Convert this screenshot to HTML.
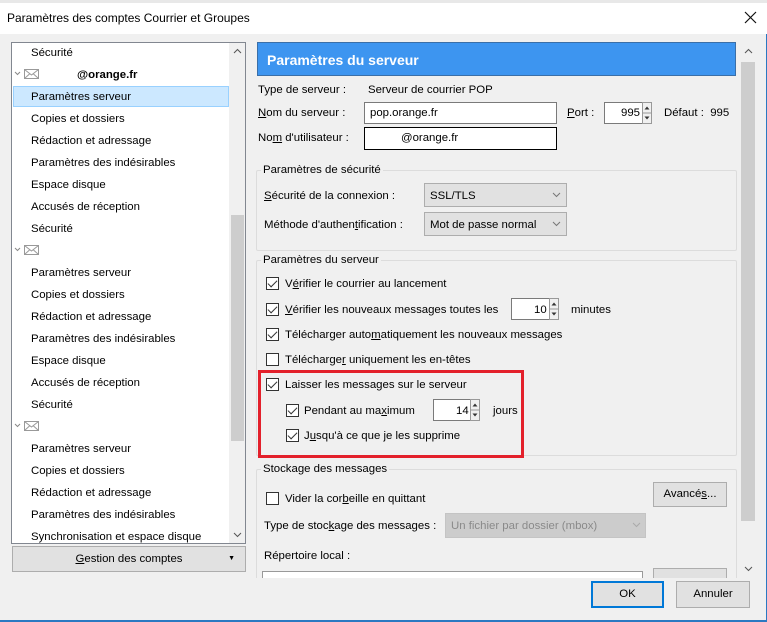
<!DOCTYPE html>
<html><head><meta charset="utf-8"><style>
*{box-sizing:border-box;margin:0;padding:0}
body{width:767px;height:622px;overflow:hidden;background:#f0f0f0;font-family:"Liberation Sans",sans-serif;font-size:11.4px;color:#000;position:relative}
.a{position:absolute;white-space:nowrap}
.t{position:absolute;white-space:nowrap;line-height:14px}
.cb{position:absolute;width:13px;height:13px;border:1px solid #333;background:#fff}
.cb.c::after{content:"";position:absolute;left:3px;top:0px;width:4px;height:8px;border:solid #333;border-width:0 1.5px 1.5px 0;transform:rotate(45deg)}
.in{position:absolute;background:#fff;border:1px solid #7a7a7a}
.sel{position:absolute;background:#e1e1e1;border:1px solid #adadad}
.gb{position:absolute;border:1px solid #dcdcdc;border-radius:2px}
.btn{position:absolute;background:#e1e1e1;border:1px solid #adadad;text-align:center}
.spin{position:absolute;width:10px;height:22px}
u{text-decoration:underline}
.env{position:absolute}
</style></head><body>
<div class="a" style="left:0;top:0;width:767px;height:3px;background:#e8e8e8"></div>
<div class="a" style="left:0;top:3px;width:767px;height:31px;background:#fff"></div>
<div class="t" style="left:7px;top:11px;font-size:12px">Paramètres des comptes Courrier et Groupes</div>
<svg class="a" style="left:744px;top:11px" width="13" height="13"><path d="M1 1L12 12M12 1L1 12" stroke="#111" stroke-width="1.2"/></svg>
<div class="a" style="left:766px;top:34px;width:1px;height:588px;background:#2b79c2"></div>
<div class="a" style="left:0;top:620px;width:767px;height:2px;background:#2b79c2"></div>

<!-- tree -->
<div class="a" style="left:11px;top:42px;width:235px;height:502px;background:#fff;border:1px solid #828790"></div>
<div class="a" style="left:229px;top:43px;width:16px;height:500px;background:#f0f0f0"></div>
<div class="a" style="left:231px;top:215px;width:13px;height:226px;background:#cdcdcd"></div>
<svg class="a" style="left:233px;top:48px" width="9" height="6"><path d="M1 5L4.5 1.5L8 5" stroke="#555" fill="none"/></svg>
<svg class="a" style="left:233px;top:532px" width="9" height="6"><path d="M1 1L4.5 4.5L8 1" stroke="#555" fill="none"/></svg>
<div class="a" style="left:13px;top:86px;width:216px;height:21px;background:#cce8ff;border:1px solid #99d1ff"></div>
<div class="t" style="left:31px;top:46px">Sécurité</div>
<svg class="env" style="left:14px;top:68px" width="26" height="12"><path d="M1 4L3.5 6.5L6 4" stroke="#888" fill="none"/><rect x="10.5" y="1.5" width="14" height="9" fill="#fff" stroke="#999"/><path d="M10.5 1.5L17.5 7L24.5 1.5M10.5 10.5L15.5 6M24.5 10.5L19.5 6" stroke="#999" fill="none"/></svg>
<div class="t" style="left:77px;top:68px;font-weight:bold">@orange.fr</div>
<div class="t" style="left:31px;top:90px">Paramètres serveur</div>
<div class="t" style="left:31px;top:112px">Copies et dossiers</div>
<div class="t" style="left:31px;top:134px">Rédaction et adressage</div>
<div class="t" style="left:31px;top:156px">Paramètres des indésirables</div>
<div class="t" style="left:31px;top:178px">Espace disque</div>
<div class="t" style="left:31px;top:200px">Accusés de réception</div>
<div class="t" style="left:31px;top:222px">Sécurité</div>
<svg class="env" style="left:14px;top:244px" width="26" height="12"><path d="M1 4L3.5 6.5L6 4" stroke="#888" fill="none"/><rect x="10.5" y="1.5" width="14" height="9" fill="#fff" stroke="#999"/><path d="M10.5 1.5L17.5 7L24.5 1.5M10.5 10.5L15.5 6M24.5 10.5L19.5 6" stroke="#999" fill="none"/></svg>
<div class="t" style="left:31px;top:266px">Paramètres serveur</div>
<div class="t" style="left:31px;top:288px">Copies et dossiers</div>
<div class="t" style="left:31px;top:310px">Rédaction et adressage</div>
<div class="t" style="left:31px;top:332px">Paramètres des indésirables</div>
<div class="t" style="left:31px;top:354px">Espace disque</div>
<div class="t" style="left:31px;top:376px">Accusés de réception</div>
<div class="t" style="left:31px;top:398px">Sécurité</div>
<svg class="env" style="left:14px;top:420px" width="26" height="12"><path d="M1 4L3.5 6.5L6 4" stroke="#888" fill="none"/><rect x="10.5" y="1.5" width="14" height="9" fill="#fff" stroke="#999"/><path d="M10.5 1.5L17.5 7L24.5 1.5M10.5 10.5L15.5 6M24.5 10.5L19.5 6" stroke="#999" fill="none"/></svg>
<div class="t" style="left:31px;top:442px">Paramètres serveur</div>
<div class="t" style="left:31px;top:464px">Copies et dossiers</div>
<div class="t" style="left:31px;top:486px">Rédaction et adressage</div>
<div class="t" style="left:31px;top:508px">Paramètres des indésirables</div>
<div class="t" style="left:31px;top:530px">Synchronisation et espace disque</div>
<div class="btn" style="left:12px;top:546px;width:234px;height:26px;line-height:24px"><u>G</u>estion des comptes<span style="position:absolute;right:10px;font-size:7px">▼</span></div>

<!-- right -->
<div class="a" style="left:739px;top:42px;width:17px;height:536px;background:#f0f0f0"></div>
<div class="a" style="left:741px;top:62px;width:14px;height:459px;background:#cdcdcd"></div>
<svg class="a" style="left:744px;top:48px" width="9" height="6"><path d="M1 5L4.5 1.5L8 5" stroke="#555" fill="none"/></svg>
<svg class="a" style="left:744px;top:566px" width="9" height="6"><path d="M1 1L4.5 4.5L8 1" stroke="#555" fill="none"/></svg>
<div class="a" style="left:257px;top:42px;width:479px;height:34px;background:#3d95f0;border:1px solid #3a6fa8"></div>
<div class="t" style="left:267px;top:52px;color:#fff;font-weight:bold;font-size:14px;line-height:16px">Paramètres du serveur</div>
<div class="t" style="left:258px;top:83px">Type de serveur :</div>
<div class="t" style="left:368px;top:83px">Serveur de courrier POP</div>
<div class="t" style="left:258px;top:106px"><u>N</u>om du serveur :</div>
<div class="in" style="left:364px;top:102px;width:193px;height:22px"></div>
<div class="t" style="left:370px;top:106px">pop.orange.fr</div>
<div class="t" style="left:567px;top:106px"><u>P</u>ort :</div>
<div class="in" style="left:604px;top:102px;width:39px;height:22px"></div>
<div class="t" style="left:621px;top:106px">995</div>
<svg class="spin" style="left:642px;top:102px" width="10" height="22"><rect x="0.5" y="0.5" width="9" height="21" fill="#f0f0f0" stroke="#999"/><path d="M0 11H10" stroke="#999"/><path d="M2.5 7.5L5 4.5L7.5 7.5Z M2.5 14.5L5 17.5L7.5 14.5Z" fill="#333"/></svg>
<div class="t" style="left:664px;top:106px">Défaut :&nbsp; 995</div>
<div class="t" style="left:258px;top:131px">No<u>m</u> d'utilisateur :</div>
<div class="in" style="left:364px;top:127px;width:193px;height:23px;border-color:#000"></div>
<div class="t" style="left:401px;top:131px">@orange.fr</div>

<div class="gb" style="left:256px;top:170px;width:481px;height:81px"></div>
<div class="t" style="left:261px;top:163px;background:#f0f0f0;padding:0 2px">Paramètres de sécurité</div>
<div class="t" style="left:264px;top:189px"><u>S</u>écurité de la connexion :</div>
<div class="sel" style="left:424px;top:183px;width:143px;height:24px"></div>
<div class="t" style="left:430px;top:189px">SSL/TLS</div>
<svg class="a" style="left:552px;top:192px" width="9" height="6"><path d="M1 1L4.5 4.5L8 1" stroke="#777" fill="none"/></svg>
<div class="t" style="left:264px;top:218px">Méthode d'authen<u>t</u>ification :</div>
<div class="sel" style="left:424px;top:212px;width:143px;height:24px"></div>
<div class="t" style="left:430px;top:218px">Mot de passe normal</div>
<svg class="a" style="left:552px;top:221px" width="9" height="6"><path d="M1 1L4.5 4.5L8 1" stroke="#777" fill="none"/></svg>

<div class="gb" style="left:256px;top:260px;width:481px;height:196px"></div>
<div class="t" style="left:261px;top:253px;background:#f0f0f0;padding:0 2px">Paramètres du serveur</div>
<div class="cb c" style="left:266px;top:277px"></div>
<div class="t" style="left:285px;top:277px">V<u>é</u>rifier le courrier au lancement</div>
<div class="cb c" style="left:266px;top:303px"></div>
<div class="t" style="left:285px;top:303px"><u>V</u>érifier les nouveaux messages toutes les</div>
<div class="in" style="left:511px;top:298px;width:39px;height:22px"></div>
<div class="t" style="left:534px;top:303px">10</div>
<svg class="spin" style="left:549px;top:298px" width="10" height="22"><rect x="0.5" y="0.5" width="9" height="21" fill="#f0f0f0" stroke="#999"/><path d="M0 11H10" stroke="#999"/><path d="M2.5 7.5L5 4.5L7.5 7.5Z M2.5 14.5L5 17.5L7.5 14.5Z" fill="#333"/></svg>
<div class="t" style="left:571px;top:303px">minutes</div>
<div class="cb c" style="left:266px;top:328px"></div>
<div class="t" style="left:285px;top:328px">Télécharger auto<u>m</u>atiquement les nouveaux messages</div>
<div class="cb" style="left:266px;top:353px"></div>
<div class="t" style="left:285px;top:353px">Télécharge<u>r</u> uniquement les en-têtes</div>
<div class="a" style="left:258px;top:370px;width:266px;height:88px;border:3px solid #e3202b"></div>
<div class="cb c" style="left:266px;top:378px"></div>
<div class="t" style="left:285px;top:378px">Laisser les messages sur le serveur</div>
<div class="cb c" style="left:286px;top:404px"></div>
<div class="t" style="left:304px;top:404px">Pendant au ma<u>x</u>imum</div>
<div class="in" style="left:433px;top:399px;width:38px;height:22px"></div>
<div class="t" style="left:456px;top:404px">14</div>
<svg class="spin" style="left:470px;top:399px" width="10" height="22"><rect x="0.5" y="0.5" width="9" height="21" fill="#f0f0f0" stroke="#999"/><path d="M0 11H10" stroke="#999"/><path d="M2.5 7.5L5 4.5L7.5 7.5Z M2.5 14.5L5 17.5L7.5 14.5Z" fill="#333"/></svg>
<div class="t" style="left:493px;top:404px">jours</div>
<div class="cb c" style="left:286px;top:429px"></div>
<div class="t" style="left:304px;top:429px">J<u>u</u>squ'à ce que je les supprime</div>

<div class="gb" style="left:256px;top:469px;width:481px;height:120px"></div>
<div class="t" style="left:261px;top:462px;background:#f0f0f0;padding:0 2px">Stockage des messages</div>
<div class="cb" style="left:266px;top:492px"></div>
<div class="t" style="left:285px;top:492px">Vider la cor<u>b</u>eille en quittant</div>
<div class="btn" style="left:653px;top:482px;width:74px;height:25px;line-height:23px">Avancé<u>s</u>...</div>
<div class="t" style="left:264px;top:519px">Type de stoc<u>k</u>age des messages :</div>
<div class="a" style="left:445px;top:513px;width:201px;height:25px;background:#ccc;border:1px solid #c4c4c4"></div>
<div class="t" style="left:451px;top:519px;color:#8a8a8a">Un fichier par dossier (mbox)</div>
<svg class="a" style="left:632px;top:522px" width="9" height="6"><path d="M1 1L4.5 4.5L8 1" stroke="#aaa" fill="none"/></svg>
<div class="t" style="left:264px;top:549px">Répertoire local :</div>
<div class="a" style="left:262px;top:571px;width:381px;height:7px;background:#fff;border:1px solid #999;border-bottom:none"></div>
<div class="a" style="left:653px;top:568px;width:74px;height:10px;background:#e1e1e1;border:1px solid #adadad;border-bottom:none"></div>
<div class="a" style="left:252px;top:578px;width:514px;height:42px;background:#f0f0f0"></div>
<div class="btn" style="left:591px;top:581px;width:73px;height:27px;line-height:23px;border:2px solid #0078d7">OK</div>
<div class="btn" style="left:676px;top:581px;width:74px;height:27px;line-height:25px">Annuler</div>
</body></html>
